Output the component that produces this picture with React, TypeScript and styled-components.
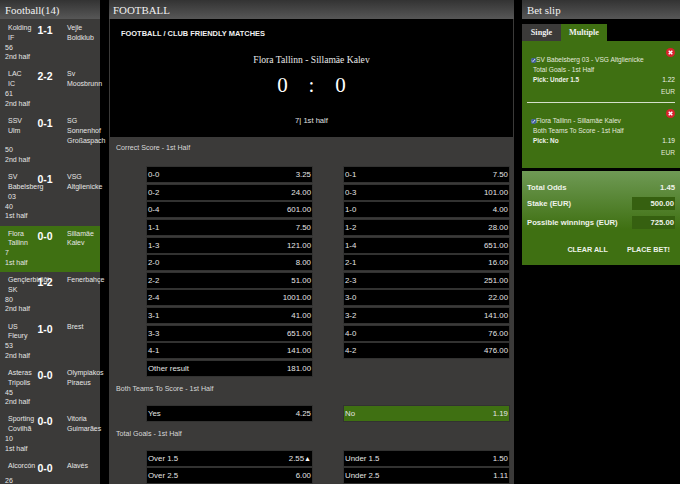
import React from "react";
import styled, { createGlobalStyle } from "styled-components";

const Global = createGlobalStyle`
  html, body {
    margin: 0;
    padding: 0;
    background: #000;
    overflow: hidden;
  }
  * {
    box-sizing: border-box;
  }
`;

const Page = styled.div`
  display: flex;
  width: 680px;
  height: 484px;
  overflow: hidden;
  background: #000;
  color: #fff;
  font-family: "Liberation Sans", Arial, sans-serif;
  font-size: 7px;
`;

const Heading = styled.h2`
  margin: 0;
  height: 19px;
  padding-left: ${(p: { $pad?: number }) => p.$pad ?? 5}px;
  font-family: "Liberation Serif", "Times New Roman", serif;
  font-size: 10.9px;
  font-weight: normal;
  line-height: 20px;
  color: #f2f2f2;
  background: linear-gradient(#333, #575757);
`;

const Sidebar = styled.aside`
  flex: none;
  width: 100px;
  height: 484px;
  background: #3b3a39;
`;

const MatchList = styled.div`
  padding-top: 1px;
`;

const MatchRow = styled.div<{ $active?: boolean }>`
  padding: 0 0 4.3px 5px;
  line-height: 9.8px;
  color: #e6e6e6;
  background: ${(p) => (p.$active ? "#3f7012" : "transparent")};
`;

const Teams = styled.div`
  display: grid;
  grid-template-columns: 28px 24px 1fr;
`;

const TeamName = styled.div`
  padding: 3px 0 0 3px;
  white-space: pre;
`;

const Score = styled.div`
  position: relative;
  z-index: 1;
  height: 18px;
  padding-top: 4px;
  font-size: 10.5px;
  font-weight: bold;
  line-height: 12px;
  color: #fff;
  text-align: center;
  white-space: nowrap;
`;

const Away = styled(TeamName)`
  padding-left: 10px;
`;

const Main = styled.main`
  flex: none;
  width: 405px;
  height: 484px;
  margin-left: 9px;
  overflow: hidden;
  background: #3b3a39;
`;

const MatchPanel = styled.section`
  height: 118px;
  margin: 0 1px;
  padding-top: 10px;
  background: #000;
`;

const League = styled.div`
  padding-left: 11px;
  font-size: 7.45px;
  font-weight: bold;
  line-height: 9px;
  color: #f0f0f0;
`;

const Fixture = styled.div`
  margin-top: 16px;
  font-family: "Liberation Serif", "Times New Roman", serif;
  font-size: 9.6px;
  line-height: 11px;
  text-align: center;
  color: #e8e8e8;
`;

const BigScore = styled.div`
  display: grid;
  grid-template-columns: 29px 29px 29px;
  justify-content: center;
  margin-top: 8px;
  font-family: "Liberation Serif", "Times New Roman", serif;
  font-size: 21px;
  line-height: 24px;
  text-align: center;
  color: #fff;
`;

const Period = styled.div`
  margin-top: 19px;
  font-size: 7.6px;
  line-height: 10px;
  text-align: center;
  color: #e0e0e0;
`;

const MarketTitle = styled.div`
  height: 10px;
  margin: ${(p: { $top: number }) => p.$top}px 0 0 7px;
  font-size: 7.1px;
  line-height: 10px;
  color: #d8d8d8;
`;

const OddsGrid = styled.div<{ $top: number }>`
  display: grid;
  grid-template-columns: 165px 165px;
  column-gap: 32px;
  row-gap: 2.65px;
  margin: ${(p) => p.$top}px 0 0 38px;
`;

const OddsCell = styled.div<{ $selected?: boolean }>`
  display: flex;
  justify-content: space-between;
  align-items: center;
  height: 15px;
  padding: 0 1px;
  font-size: 7.85px;
  color: #e4e4e4;
  background: ${(p) => (p.$selected ? "#3f7012" : "#000")};
  box-shadow: 0 0 0 1px #323231;
`;

const Up = styled.span`
  font-size: 7px;
  line-height: 0;
  color: #fff;
`;

const Slip = styled.aside`
  flex: none;
  width: 158px;
  margin-left: 8px;
`;

const Tabs = styled.div`
  display: flex;
  height: 17px;
  margin-top: 5px;
`;

const Tab = styled.div<{ $active?: boolean }>`
  width: ${(p) => (p.$active ? 46 : 39)}px;
  font-family: "Liberation Serif", "Times New Roman", serif;
  font-size: 8.2px;
  font-weight: bold;
  line-height: 18px;
  text-align: center;
  color: #f0f0f0;
  background: ${(p) => (p.$active ? "#3f7012" : "#3b3a39")};
`;

const Selections = styled.div`
  height: 127px;
  padding: 7px 5px 0 5px;
  background: #3f7012;
`;

const Selection = styled.div`
  position: relative;
  padding-top: 7px;
  font-size: 6.6px;
  line-height: 10px;
  color: #e2e8dc;

  & + & {
    margin-top: 5px;
    padding-top: 13px;
    border-top: 1px solid #d5e0cb;
  }
`;

const Remove = styled.svg`
  position: absolute;
  top: 0;
  right: 0;
  width: 9px;
  height: 9px;

  div + div > & {
    top: 6px;
  }
`;

const Line = styled.div`
  display: flex;
  align-items: center;
  padding-left: 4px;
  white-space: nowrap;
`;

const Tick = styled.input`
  flex: none;
  width: 5px;
  height: 5px;
  margin: 0;
  accent-color: #3d5c99;
`;

const Market = styled.div`
  padding-left: 6px;
`;

const Pick = styled.div`
  display: flex;
  justify-content: space-between;
  padding-left: 6px;
  font-weight: bold;
  color: #eef2ea;
  & > span:first-child {
    font-size: 6.4px;
  }
  & > span:last-child {
    font-weight: normal;
  }
`;

const Currency = styled.div`
  margin-top: 2px;
  text-align: right;
`;

const Totals = styled.div`
  height: 94px;
  margin-top: 3px;
  padding: 11px 5px 0 5px;
  background: linear-gradient(#6f9a55, #3f7012 62%);
  font-size: 7.7px;
  font-weight: bold;
  color: #eef2ea;
`;

const TotalRow = styled.div`
  display: flex;
  justify-content: space-between;
  align-items: center;
  height: ${(p: { $h: number }) => p.$h}px;
`;

const Amount = styled.span`
  width: 43px;
  height: 13px;
  padding-right: 1px;
  line-height: 14px;
  text-align: right;
  background: #366010;
`;

const Actions = styled.div`
  display: flex;
  justify-content: flex-end;
  gap: 19px;
  margin-top: 13px;
  padding-right: 5px;
  font-size: 7.2px;
`;

const rows = [
  ["Kolding\nIF", "1-1", "Vejle\nBoldklub", "56", "2nd half"],
  ["LAC\nIC", "2-2", "Sv\nMoosbrunn", "61", "2nd half"],
  ["SSV\nUlm", "0-1", "SG\nSonnenhof\nGroßaspach", "50", "2nd half"],
  ["SV\nBabelsberg\n03", "0-1", "VSG\nAltglienicke", "40", "1st half"],
  ["Flora\nTallinn", "0-0", "Sillamäe\nKalev", "7", "1st half"],
  ["Gençlerbirliği\nSK", "1-2", "Fenerbahçe", "80", "2nd half"],
  ["US\nFleury", "1-0", "Brest", "53", "2nd half"],
  ["Asteras\nTripolis", "0-0", "Olympiakos\nPiraeus", "45", "2nd half"],
  ["Sporting\nCovilhã", "0-0", "Vitoria\nGuimarães", "10", "1st half"],
  ["Alcorcón", "0-0", "Alavés", "26", "1st half"],
];

const correct = [
  ["0-0", "3.25"], ["0-1", "7.50"],
  ["0-2", "24.00"], ["0-3", "101.00"],
  ["0-4", "601.00"], ["1-0", "4.00"],
  ["1-1", "7.50"], ["1-2", "28.00"],
  ["1-3", "121.00"], ["1-4", "651.00"],
  ["2-0", "8.00"], ["2-1", "16.00"],
  ["2-2", "51.00"], ["2-3", "251.00"],
  ["2-4", "1001.00"], ["3-0", "22.00"],
  ["3-1", "41.00"], ["3-2", "141.00"],
  ["3-3", "651.00"], ["4-0", "76.00"],
  ["4-1", "141.00"], ["4-2", "476.00"],
  ["Other result", "181.00"],
];

const RemoveIcon = () => (
  <Remove viewBox="0 0 10 10">
    <circle cx="5" cy="5" r="5" fill="#d9232e" />
    <path d="M3 3l4 4M7 3l-4 4" stroke="#fff" strokeWidth="1.6" />
  </Remove>
);

const Bet = ({ title, market, pick, odds }: { title: string; market: string; pick: string; odds: string }) => (
  <Selection>
    <RemoveIcon />
    <Line>
      <Tick type="checkbox" defaultChecked />
      {title}
    </Line>
    <Market>{market}</Market>
    <Pick>
      <span>{pick}</span>
      <span>{odds}</span>
    </Pick>
    <Currency>EUR</Currency>
  </Selection>
);

export default function App() {
  return (
    <Page>
      <Global />
      <Sidebar>
        <Heading>Football(14)</Heading>
        <MatchList>
          {rows.map(([home, score, away, minute, half], i) => (
            <MatchRow key={home} $active={i === 4}>
              <Teams>
                <TeamName>{home}</TeamName>
                <Score>{score}</Score>
                <Away>{away}</Away>
              </Teams>
              <div>{minute}</div>
              <div>{half}</div>
            </MatchRow>
          ))}
        </MatchList>
      </Sidebar>
      <Main>
        <Heading $pad={4}>FOOTBALL</Heading>
        <MatchPanel>
          <League>FOOTBALL / CLUB FRIENDLY MATCHES</League>
          <Fixture>Flora Tallinn - Sillamäe Kalev</Fixture>
          <BigScore>
            <span>0</span>
            <span>:</span>
            <span>0</span>
          </BigScore>
          <Period>7| 1st half</Period>
        </MatchPanel>
        <MarketTitle $top={6}>Correct Score - 1st Half</MarketTitle>
        <OddsGrid $top={14}>
          {correct.map(([label, price]) => (
            <OddsCell key={label}>
              <span>{label}</span>
              <span>{price}</span>
            </OddsCell>
          ))}
        </OddsGrid>
        <MarketTitle $top={8}>Both Teams To Score - 1st Half</MarketTitle>
        <OddsGrid $top={12}>
          <OddsCell>
            <span>Yes</span>
            <span>4.25</span>
          </OddsCell>
          <OddsCell $selected>
            <span>No</span>
            <span>1.19</span>
          </OddsCell>
        </OddsGrid>
        <MarketTitle $top={8}>Total Goals - 1st Half</MarketTitle>
        <OddsGrid $top={11.5}>
          <OddsCell>
            <span>Over 1.5</span>
            <span>
              2.55<Up>▲</Up>
            </span>
          </OddsCell>
          <OddsCell>
            <span>Under 1.5</span>
            <span>1.50</span>
          </OddsCell>
          <OddsCell>
            <span>Over 2.5</span>
            <span>6.00</span>
          </OddsCell>
          <OddsCell>
            <span>Under 2.5</span>
            <span>1.11</span>
          </OddsCell>
        </OddsGrid>
      </Main>
      <Slip>
        <Heading>Bet slip</Heading>
        <Tabs>
          <Tab>Single</Tab>
          <Tab $active>Multiple</Tab>
        </Tabs>
        <Selections>
          <Bet title="SV Babelsberg 03 - VSG Altglienicke" market="Total Goals - 1st Half" pick="Pick: Under 1.5" odds="1.22" />
          <Bet title="Flora Tallinn - Sillamäe Kalev" market="Both Teams To Score - 1st Half" pick="Pick: No" odds="1.19" />
        </Selections>
        <Totals>
          <TotalRow $h={11}>
            <span>Total Odds</span>
            <span>1.45</span>
          </TotalRow>
          <TotalRow $h={20}>
            <span>Stake (EUR)</span>
            <Amount>500.00</Amount>
          </TotalRow>
          <TotalRow $h={19}>
            <span>Possible winnings (EUR)</span>
            <Amount>725.00</Amount>
          </TotalRow>
          <Actions>
            <span>CLEAR ALL</span>
            <span>PLACE BET!</span>
          </Actions>
        </Totals>
      </Slip>
    </Page>
  );
}
